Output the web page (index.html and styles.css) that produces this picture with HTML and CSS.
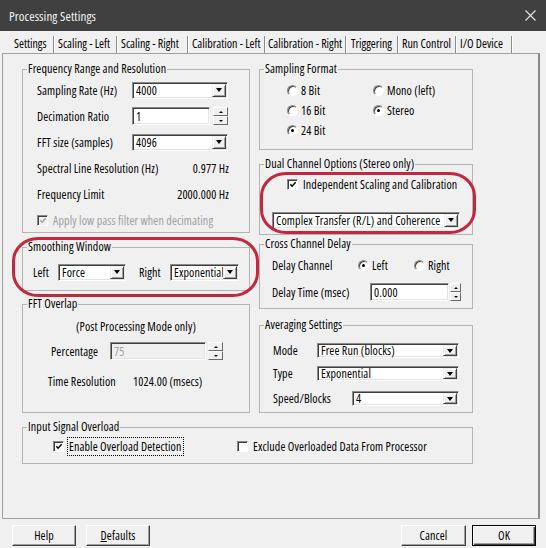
FILE: index.html
```html
<!DOCTYPE html>
<html>
<head>
<meta charset="utf-8">
<link rel="stylesheet" href="styles.css">
</head>
<body>
<div class="window">
  <div class="titlebar">
    <span class="title">Processing Settings</span>
    <svg class="close" width="11" height="11" viewBox="0 0 11 11"><path d="M0.5 0.5 L10.5 10.5 M10.5 0.5 L0.5 10.5" stroke="#e6e6e6" stroke-width="1.1" fill="none"/></svg>
  </div>
  <div class="tabs">
    <span class="tab t1 sel">Settings</span>
    <span class="tab t2">Scaling - Left</span>
    <span class="tab t3">Scaling - Right</span>
    <span class="tab t4">Calibration - Left</span>
    <span class="tab t5">Calibration - Right</span>
    <span class="tab t6">Triggering</span>
    <span class="tab t7">Run Control</span>
    <span class="tab t8">I/O Device</span>
  </div>
  <div class="panel">
    <div class="cols">
      <div class="col col-l">
        <div class="group g-freq">
          <span class="gtitle">Frequency Range and Resolution</span>
          <div class="row"><span class="lbl w95">Sampling Rate (Hz)</span><div class="combo w96"><span class="val">4000</span><span class="drop"></span></div></div>
          <div class="row"><span class="lbl w95">Decimation Ratio</span><div class="edit w78">1</div><div class="spin s15"><span class="up"></span><span class="dn"></span></div></div>
          <div class="row"><span class="lbl w95">FFT size (samples)</span><div class="combo w96"><span class="val">4096</span><span class="drop"></span></div></div>
          <div class="row between"><span>Spectral Line Resolution (Hz)</span><span>0.977 Hz</span></div>
          <div class="row between"><span>Frequency Limit</span><span>2000.000 Hz</span></div>
          <div class="row"><span class="opt dis"><span class="chk dis"><svg viewBox="0 0 9 9" width="9" height="9"><path d="M1.5 4.2 L3.5 6.4 L7.5 2" stroke="#a0a0a0" stroke-width="1.6" fill="none"/></svg></span><span class="ctext">Apply low pass filter when decimating</span></span></div>
        </div>
        <div class="group g-smooth">
          <span class="gtitle">Smoothing Window</span>
          <div class="row"><span class="lbl w25">Left</span><div class="combo w68"><span class="val">Force</span><span class="drop"></span></div><span class="lbl w31 ml13">Right</span><div class="combo w69"><span class="val">Exponential</span><span class="drop"></span></div></div>
        </div>
        <div class="group g-fft">
          <span class="gtitle">FFT Overlap</span>
          <div class="row center">(Post Processing Mode only)</div>
          <div class="row pl28 mt8"><span class="lbl w59">Percentage</span><div class="edit w96 off">75</div><div class="spin s15 ml2"><span class="up"></span><span class="dn"></span></div></div>
          <div class="row pl25 mt12"><span class="lbl w85">Time Resolution</span><span>1024.00 (msecs)</span></div>
        </div>
      </div>
      <div class="col col-r">
        <div class="group g-sf">
          <span class="gtitle">Sampling Format</span>
          <div class="radgrid">
            <span class="opt"><span class="rad"></span>8 Bit</span>
            <span class="opt"><span class="rad"></span>Mono (left)</span>
            <span class="opt"><span class="rad"></span>16 Bit</span>
            <span class="opt"><span class="rad on"></span>Stereo</span>
            <span class="opt"><span class="rad on"></span>24 Bit</span>
          </div>
        </div>
        <div class="group g-dual">
          <span class="gtitle">Dual Channel Options (Stereo only)</span>
          <div class="row h16 ml27"><span class="opt"><span class="chk"><svg viewBox="0 0 9 9" width="9" height="9"><path d="M1.5 4.2 L3.5 6.4 L7.5 2" stroke="#000" stroke-width="1.6" fill="none"/></svg></span><span class="ctext">Independent Scaling and Calibration</span></span></div>
          <div class="row ml12 mt19"><div class="combo w188"><span class="val">Complex Transfer (R/L) and Coherence</span><span class="drop"></span></div></div>
        </div>
        <div class="group g-cross">
          <span class="gtitle">Cross Channel Delay</span>
          <div class="row"><span class="lbl w86">Delay Channel</span><span class="opt w56"><span class="rad on"></span>Left</span><span class="opt"><span class="rad"></span>Right</span></div>
          <div class="row mt9"><span class="lbl w98">Delay Time (msec)</span><div class="edit w79">0.000</div><div class="spin s11 ml1"><span class="up"></span><span class="dn"></span></div></div>
        </div>
        <div class="group g-avg">
          <span class="gtitle">Averaging Settings</span>
          <div class="row h15"><span class="lbl w44">Mode</span><div class="combo w142"><span class="val">Free Run (blocks)</span><span class="drop"></span></div></div>
          <div class="row h15 mt8"><span class="lbl w44">Type</span><div class="combo w142"><span class="val">Exponential</span><span class="drop"></span></div></div>
          <div class="row h15 mt10"><span class="lbl w79">Speed/Blocks</span><div class="combo w107"><span class="val">4</span><span class="drop"></span></div></div>
        </div>
      </div>
    </div>
    <div class="group g-iso">
      <span class="gtitle">Input Signal Overload</span>
      <div class="row h16">
        <span class="opt w184"><span class="chk"><svg viewBox="0 0 9 9" width="9" height="9"><path d="M1.5 4.2 L3.5 6.4 L7.5 2" stroke="#000" stroke-width="1.6" fill="none"/></svg></span><span class="focus">Enable Overload Detection</span></span>
        <span class="opt"><span class="chk"></span><span class="ctext">Exclude Overloaded Data From Processor</span></span>
      </div>
    </div>
  </div>
  <div class="buttons">
    <span class="btn">Help</span>
    <span class="btn ml10"><span><u>D</u>efaults</span></span>
    <span class="spacer"></span>
    <span class="btn w65">Cancel</span>
    <span class="btn def ml6">OK</span>
  </div>
  <div class="annot a1"></div>
  <div class="annot a2"></div>
</div>
</body>
</html>
```
FILE: styles.css
```css
* { box-sizing: border-box; }
html, body { margin: 0; padding: 0; }
body {
  width: 546px; height: 548px; overflow: hidden;
  background: #f0f0f0;
  font-family: "Open Sans", "Liberation Sans", Arial, sans-serif;
  font-stretch: 75%;
  font-size: 12px; letter-spacing: 0.12px; color: #000;
}
.window { position: relative; width: 546px; height: 548px; display: flex; flex-direction: column; }

.titlebar {
  height: 31px; flex: none; background: #404040; color: #f2f2f2;
  display: flex; align-items: center; justify-content: space-between;
  padding: 0 10px 0 9px; font-size: 13px;
}
.title { letter-spacing: 0.1px; }
.close { display: block; }

.tabs { height: 22px; flex: none; display: flex; align-items: flex-end; padding-left: 10px; letter-spacing: 0; }
.tab {
  height: 17px; line-height: 15px; padding-left: 4px; white-space: nowrap;
  border-right: 1px solid #8c8c8c; box-shadow: 1px 0 0 #fff; overflow: hidden;
}
.t1 { width: 44px; } .t2 { width: 63px; } .t3 { width: 71px; } .t4 { width: 77px; }
.t5 { width: 81px; padding-left: 3px; } .t6 { width: 52px; padding-left: 5px; } .t7 { width: 58px; } .t8 { width: 56px; }

.panel {
  flex: none; margin-left: 2px; width: 538px; height: 466px;
  border: 1px solid #a0a0a0; border-right: 2px solid #8a8a8a;
  padding: 15px 0 0 19px;
}
.cols { display: flex; gap: 9px; }
.col { display: flex; flex-direction: column; }
.col-l { width: 228px; }
.col-r { width: 214px; }

.group { position: relative; border: 1px solid #b4b4b4; }
.gtitle {
  position: absolute; top: -8px; left: 4px; padding: 0 1px;
  background: #f0f0f0; line-height: 14px; white-space: nowrap;
}

.g-freq { height: 164px; display: flex; flex-direction: column; gap: 8px; padding: 11px 20px 0 14px; }
.g-smooth { height: 44px; margin-top: 14px; padding: 15px 0 0 10px; }
.g-fft { height: 109px; margin-top: 13px; padding-top: 13px; }
.g-sf { height: 81px; padding: 12px 0 0 27px; }
.g-dual { height: 71px; margin-top: 14px; padding-top: 11px; }
.g-cross { height: 65px; margin-top: 9px; padding: 11px 0 0 12px; }
.g-avg { height: 88px; margin-top: 16px; padding: 17px 0 0 13px; }
.g-iso { width: 451px; height: 37px; margin-top: 14px; padding: 10px 0 0 30px; }

.row { display: flex; align-items: center; height: 18px; white-space: nowrap; }
.row.h16 { height: 16px; }
.row.h15 { height: 15px; }
.row.between { justify-content: space-between; }
.row.center { justify-content: center; height: 16px; }
.lbl { flex: none; }
.w25 { width: 25px; } .w31 { width: 31px; } .w44 { width: 44px; } .w59 { width: 59px; }
.w79 { width: 79px; } .w85 { width: 85px; } .w86 { width: 86px; } .w95 { width: 95px; } .w98 { width: 98px; }
.w56 { width: 56px; } .w184 { width: 184px; }
.ml1 { margin-left: 1px; } .ml2 { margin-left: 2px; } .ml6 { margin-left: 6px; } .ml10 { margin-left: 10px; }
.ml12 { margin-left: 12px; } .ml13 { margin-left: 13px; } .ml27 { margin-left: 27px; }
.mt8 { margin-top: 8px; } .mt9 { margin-top: 9px; } .mt10 { margin-top: 10px; } .mt12 { margin-top: 12px; } .mt19 { margin-top: 19px; }
.pl25 { padding-left: 25px; } .pl28 { padding-left: 28px; }

.combo, .edit {
  flex: none; height: 17px; display: flex; align-items: center;
  background: #fff;
  border: 1px solid; border-color: #8a8a8a #ffffff #ffffff #8a8a8a;
  box-shadow: inset 1px 1px 0 #404040, inset -1px -1px 0 #e3e3e3;
}
.row.h15 .combo { height: 15px; }
.edit { padding-left: 3px; height: 18px; }
.edit.off { background: #f0f0f0; color: #a0a0a0; }
.combo .val { flex: 1; padding-left: 3px; overflow: hidden; }
.combo.w68 { width: 68px; } .combo.w69 { width: 69px; } .combo.w96 { width: 96px; }
.combo.w107 { width: 107px; } .combo.w142 { width: 142px; } .combo.w188 { width: 188px; }
.edit.w78 { width: 78px; margin-right: 3px; } .edit.w79 { width: 79px; } .edit.w96 { width: 96px; }

.drop {
  flex: none; width: 14px; height: calc(100% - 2px); margin-right: 1px;
  background: #f0f0f0;
  border: 1px solid; border-color: #f0f0f0 #404040 #404040 #f0f0f0;
  box-shadow: inset 1px 1px 0 #fff, inset -1px -1px 0 #a0a0a0;
  display: flex; align-items: center; justify-content: center;
}
.drop::after {
  content: ""; width: 0; height: 0;
  border-left: 3.5px solid transparent; border-right: 3.5px solid transparent; border-top: 4px solid #000;
}

.spin { flex: none; display: flex; flex-direction: column; height: 18px; }
.spin.s15 { width: 15px; } .spin.s11 { width: 11px; }
.spin span {
  flex: 1; background: #f0f0f0; display: flex; align-items: center; justify-content: center;
  border: 1px solid; border-color: #fff #696969 #696969 #fff;
}
.spin .up::after {
  content: ""; border-left: 2px solid transparent; border-right: 2px solid transparent; border-bottom: 2px solid #000;
}
.spin .dn::after {
  content: ""; border-left: 2px solid transparent; border-right: 2px solid transparent; border-top: 2px solid #000;
}

.radgrid { display: grid; grid-template-columns: 86px 110px; grid-auto-rows: 16px; row-gap: 4px; }
.opt { display: flex; align-items: center; gap: 3px; white-space: nowrap; flex: none; }
.rad {
  position: relative; flex: none; width: 11px; height: 11px; border-radius: 50%;
  background: #fff; border: 1px solid; border-color: #8a8a8a #fff #fff #8a8a8a;
  box-shadow: inset 1px 1px 0 #404040;
}
.rad.on::after {
  content: ""; position: absolute; left: 3px; top: 3px; width: 3px; height: 3px; border-radius: 50%; background: #000;
}
.chk {
  flex: none; width: 11px; height: 11px; background: #fff;
  border: 1px solid; border-color: #8a8a8a #fff #fff #8a8a8a;
  box-shadow: inset 1px 1px 0 #404040;
  display: flex; align-items: center; justify-content: center;
}
.chk svg { display: block; margin: 1px 0 0 1px; }
.chk.dis { background: #f0f0f0; }
.opt.dis .ctext { color: #a0a0a0; }
.opt .ctext { margin-left: 2px; }
.focus { outline: 1px dotted #000; outline-offset: 0; padding: 0 1px; margin-left: 1px; }

.buttons { display: flex; height: 21px; margin-top: 6px; padding: 0 10px 0 12px; }
.spacer { flex: 1; }
.btn {
  width: 64px; height: 21px; display: flex; align-items: center; justify-content: center;
  background: #f0f0f0; border: 1px solid; border-color: #fff #404040 #404040 #fff;
  box-shadow: inset -1px -1px 0 #a0a0a0;
}
.btn.w65 { width: 65px; }
.btn.def { border: 1px solid #000; box-shadow: inset 1px 1px 0 #fff, inset -1px -1px 0 #404040, inset -2px -2px 0 #a0a0a0; }

.annot {
  position: absolute; border: 3px solid #c4283f; pointer-events: none;
}
.a1 { left: 12px; top: 237px; width: 247px; height: 60px; border-radius: 26px / 24px; }
.a2 { left: 260px; top: 172px; width: 216px; height: 62px; border-radius: 26px / 24px; }
```
